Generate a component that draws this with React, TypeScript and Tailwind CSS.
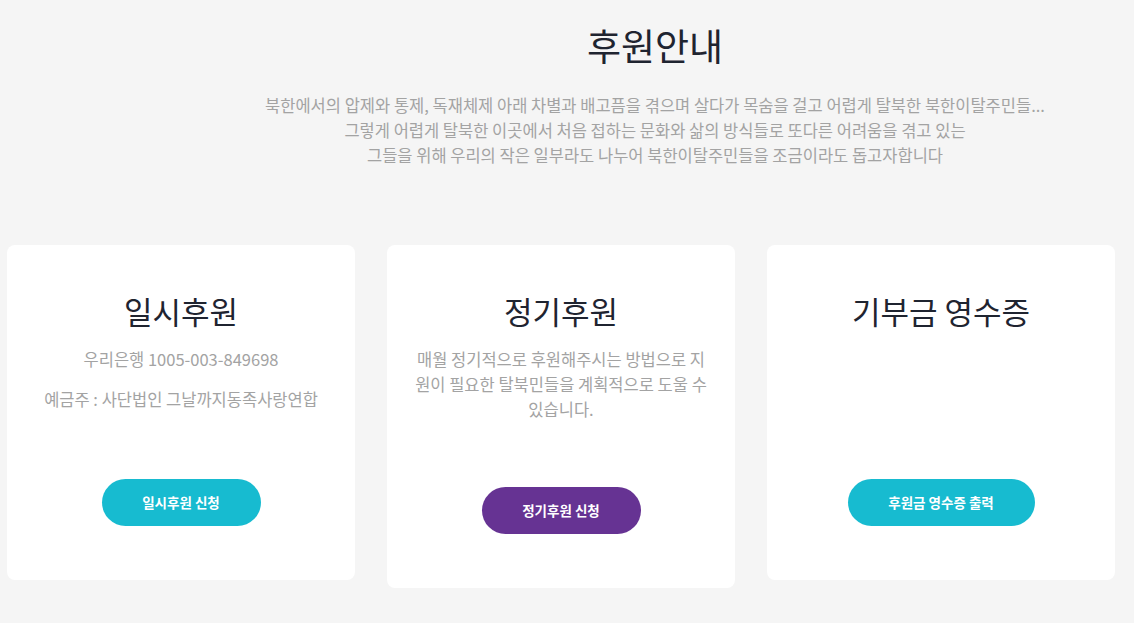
const font = { fontFamily: '"Noto Sans CJK KR", "Noto Sans", sans-serif' };

const cards = [
  {
    title: "일시후원",
    lines: ["우리은행 1005-003-849698", "예금주 : 사단법인 그날까지동족사랑연합"],
    button: "일시후원 신청",
    btn: "bg-[#17bbd0] w-[159px]",
  },
  {
    title: "정기후원",
    text: "매월 정기적으로 후원해주시는 방법으로 지원이 필요한 탈북민들을 계획적으로 도울 수 있습니다.",
    button: "정기후원 신청",
    btn: "bg-[#663393] w-[159px]",
  },
  {
    title: "기부금 영수증",
    button: "후원금 영수증 출력",
    btn: "bg-[#17bbd0] w-[187px]",
  },
];

export default function App() {
  return (
    <div className="min-h-[623px] bg-[#f5f5f5] text-[#222]" style={font}>
      <div className="pl-[176px] pt-[22px] text-center">
        <h1 className="text-[37px] leading-[46px] font-normal text-[#1f2430]">후원안내</h1>
        <div className="mt-[25px] text-[16.5px] leading-[25px] text-[#a3a3a3]">
          <p>북한에서의 압제와 통제, 독재체제 아래 차별과 배고픔을 겪으며 살다가 목숨을 걸고 어렵게 탈북한 북한이탈주민들...</p>
          <p>그렇게 어렵게 탈북한 이곳에서 처음 접하는 문화와 삶의 방식들로 또다른 어려움을 겪고 있는</p>
          <p>그들을 위해 우리의 작은 일부라도 나누어 북한이탈주민들을 조금이라도 돕고자합니다</p>
        </div>
      </div>

      <div className="flex items-start gap-8 px-[7px] mt-[77px]">
        {cards.map((c) => (
          <div key={c.title} className="w-[348px] rounded-lg bg-white px-[28px] pt-[46px] pb-[54px] text-center">
            <h2 className="text-[31px] leading-[40px] font-normal text-[#1f2430]">{c.title}</h2>
            <div className="mt-[16px] min-h-[67px] text-[16.5px] leading-[25px] text-[#a3a3a3] break-all">
              {c.lines && c.lines.map((l) => (
                <p key={l} className="mb-[15px] last:mb-0">{l}</p>
              ))}
              {c.text && <p>{c.text}</p>}
            </div>
            <button className={`mt-[65px] h-[47px] rounded-full text-[13.5px] font-bold text-white ${c.btn}`}>
              {c.button}
            </button>
          </div>
        ))}
      </div>
    </div>
  );
}
